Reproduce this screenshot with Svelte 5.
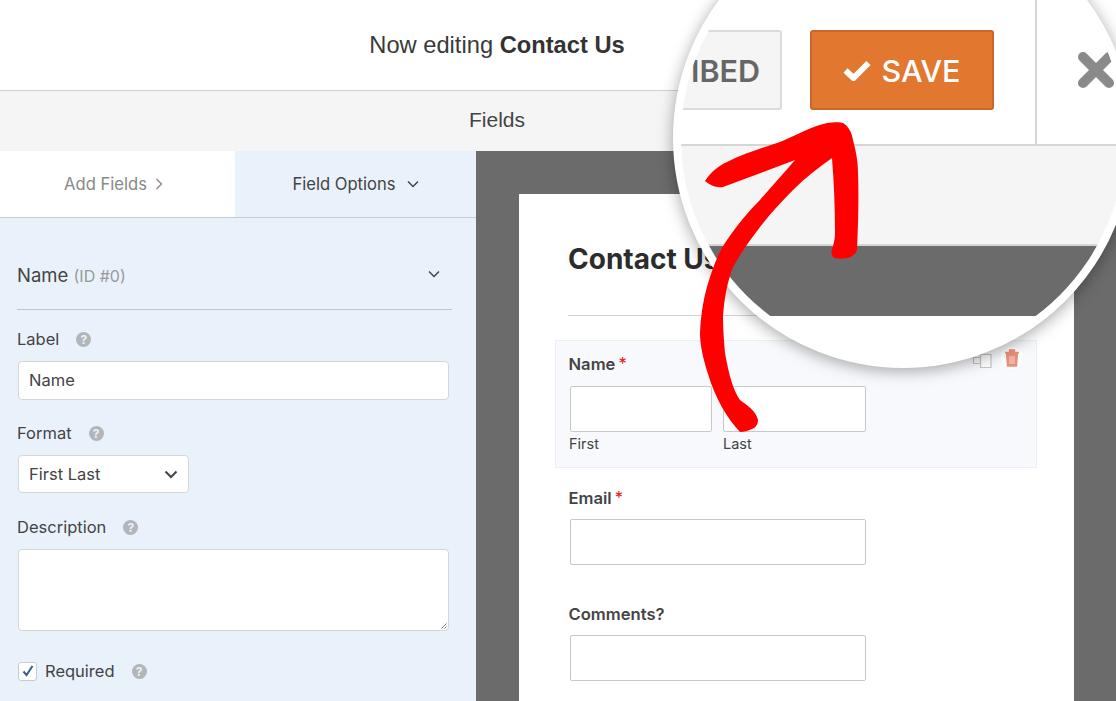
<script>
	const helpFields = {
		label: "Name",
		format: "First Last"
	};
</script>

{#snippet help()}
	<span class="help">?</span>
{/snippet}

{#snippet chevron(cls)}
	<svg class={cls} viewBox="0 0 12 8" width="12" height="8"><path d="M1 1.5l5 5 5-5" fill="none" stroke="currentColor" stroke-width="1.5" /></svg>
{/snippet}

<div class="page">
	<header class="top">
		<p>Now editing <b>Contact Us</b></p>
	</header>
	<div class="subbar">Fields</div>

	<div class="main">
		<aside class="panel">
			<div class="tabs">
				<div class="tab off">Add Fields <svg viewBox="0 0 8 12" width="8" height="12"><path d="M1.5 1l5 5-5 5" fill="none" stroke="currentColor" stroke-width="1.3" /></svg></div>
				<div class="tab on">Field Options {@render chevron("tabchev")}</div>
			</div>
			<div class="opts">
				<div class="opthead">
					<span class="optname">Name <small>(ID #0)</small></span>
					{@render chevron("headchev")}
				</div>
				<div class="lbl first">Label {@render help()}</div>
				<div class="box text">{helpFields.label}</div>
				<div class="lbl">Format {@render help()}</div>
				<div class="box select">{helpFields.format} <svg viewBox="0 0 14 9" width="14" height="9"><path d="M1.5 1.5L7 7l5.5-5.5" fill="none" stroke="#444" stroke-width="2" /></svg></div>
				<div class="lbl desc">Description {@render help()}</div>
				<div class="box area">
					<svg class="grip" viewBox="0 0 6 6" width="6" height="6"><path d="M0.5 5.5l5-5M3.5 5.5l2-2" stroke="#777" fill="none" /></svg>
				</div>
				<div class="req">
					<span class="check"><svg viewBox="0 0 14 14" width="14" height="14"><path d="M2.5 7.5l3 3.5 6-9" fill="none" stroke="#3c5f85" stroke-width="2" /></svg></span>
					Required {@render help()}
				</div>
			</div>
		</aside>

		<section class="stage">
			<div class="card">
				<h1>Contact Us</h1>
				<hr />
				<div class="field active">
					<div class="fname">Name<em>*</em></div>
					<div class="pair">
						<div>
							<div class="inp short"></div>
							<div class="sub">First</div>
						</div>
						<div class="last">
							<div class="inp short"></div>
							<div class="sub">Last</div>
						</div>
					</div>
					<div class="actions">
						<svg class="dup" viewBox="0 0 20 18" width="20" height="18"><path d="M8.5 4.5h10.5v13H8.5z" fill="#fff" stroke="#c4c4c4" stroke-width="1.2" /><path d="M8 7.5H1.5v6H8" fill="none" stroke="#c4c4c4" stroke-width="1.2" /></svg>
						<svg viewBox="0 0 24 24" width="24" height="24"><circle cx="12" cy="12" r="11" fill="#fff" /><path d="M5 6.5h14M9.5 6V4h5v2M6.5 8h11l-1 12h-9z" fill="#e9907c" stroke="#e9907c" stroke-width="1.3" /><path d="M10 10v8M12 10v8M14 10v8" stroke="#f8d5cc" /></svg>
					</div>
				</div>
				<div class="field email">
					<div class="fname">Email<em>*</em></div>
					<div class="inp wide"></div>
				</div>
				<div class="field comments">
					<div class="fname">Comments?</div>
					<div class="inp wide"></div>
				</div>
			</div>
		</section>
	</div>

	<!-- magnified corner of the builder -->
	<div class="lens">
		<div class="lens-top">
			<div class="embed">IBED</div>
			<div class="save">
				<svg viewBox="0 0 28 22" width="28" height="22"><path d="M2.5 11.5l8 7.5L25.5 4" fill="none" stroke="#fff" stroke-width="6" /></svg>
				SAVE
			</div>
			<div class="close">
				<svg viewBox="0 0 36 36" width="36" height="36"><path d="M5 5l26 26M31 5L5 31" stroke="#8a8a8a" stroke-width="10" stroke-linecap="round" /></svg>
			</div>
		</div>
		<div class="lens-bar"></div>
		<div class="lens-dark"></div>
		<div class="lens-white"></div>
	</div>

	<svg class="arrow" viewBox="0 0 1116 701" width="1116" height="701">
		<path
			fill="#ff0000"
			d="M740 432C727 418 716 400 708 374C703 358 700 345 700 333C701 312 704 295 710 277C715 262 720 250 727 240C738 224 748 212 760 200C772 186 784 173 795 160L723 187C716 188 710 185 705 181C711 172 718 166 727 162C745 153 762 148 780 142C797 135 812 126 827 123C835 122 840 122 843 123C849 127 852 133 853 140C857 155 858 165 858 173C859 200 858 225 857 250C856 254 852 257 847 258C842 259 836 259 833 257C831 254 831 252 832 250C834 243 835 238 835 233C835 208 834 183 832 158C818 168 805 178 793 190C781 202 770 214 760 227C750 240 741 253 733 267C727 283 724 300 723 317C723 330 724 342 725 353C729 375 733 390 740 400C747 405 756 411 758 420C758 425 755 428 752 429C748 431 744 432 740 432Z"
		/>
	</svg>
</div>

<style>
	:global(body) {
		margin: 0;
	}

	.page {
		position: relative;
		width: 1116px;
		height: 701px;
		overflow: hidden;
		background: #fff;
		font-family: Inter, "Liberation Sans", Arial, sans-serif;
		color: #444;
	}

	.top {
		height: 90px;
		border-bottom: 1px solid #d0d0d0;
		display: flex;
		align-items: center;
		justify-content: center;
		padding-right: 122px;
		font-family: "Liberation Sans", Arial, sans-serif;
	}

	.top p {
		margin: 0;
		font-size: 23.7px;
		color: #3a3a3a;
	}

	.top b {
		color: #333;
	}

	.subbar {
		height: 58px;
		padding-bottom: 2px;
		background: #f5f5f5;
		display: flex;
		align-items: center;
		justify-content: center;
		padding-right: 122px;
		font-family: "Liberation Sans", Arial, sans-serif;
		font-size: 21px;
		color: #444;
	}

	.main {
		display: flex;
		height: 550px;
	}

	.panel {
		width: 476px;
		flex: none;
		background: #e9f2fa;
		overflow: hidden;
	}

	.tabs {
		display: flex;
		height: 66px;
		border-bottom: 1px solid #c4ccd4;
	}

	.tab {
		display: flex;
		align-items: center;
		justify-content: center;
		gap: 8px;
		font-size: 16.6px;
	}

	.tab.off {
		width: 235px;
		box-sizing: border-box;
		padding-right: 8px;
		background: #fff;
		color: #888;
	}

	.tab.on {
		flex: 1;
		color: #444;
	}

	.tabchev {
		margin-left: 3px;
	}

	.opts {
		padding: 0 24px 0 17px;
	}

	.opthead {
		display: flex;
		align-items: center;
		justify-content: space-between;
		height: 65px;
		padding: 24px 12px 2px 0;
		border-bottom: 1px solid #bdc6cf;
	}

	.optname {
		font-size: 18.5px;
		color: #444;
	}

	.optname small {
		font-size: 16px;
		color: #999;
	}

	.headchev {
		color: #444;
		margin-top: -2px;
	}

	.lbl {
		display: flex;
		align-items: center;
		gap: 17px;
		height: 20px;
		margin: 23px 0 12px;
		font-size: 16.5px;
	}

	.lbl.first {
		margin-top: 19px;
	}

	.lbl.desc {
		margin-top: 24px;
	}

	.help {
		display: inline-block;
		width: 15px;
		height: 15px;
		margin-top: 1px;
		border-radius: 50%;
		background: #b3b6b9;
		color: #e9f2fa;
		font-size: 12px;
		font-weight: bold;
		line-height: 15px;
		text-align: center;
	}

	.box {
		box-sizing: border-box;
		margin: 0 3px 0 1px;
		background: #fff;
		border: 1px solid #d4d7da;
		border-radius: 4px;
		font-size: 16.5px;
		color: #444;
		display: flex;
		align-items: center;
		padding: 0 10px;
	}

	.text {
		height: 39px;
		padding-bottom: 1px;
	}

	.select {
		width: 171px;
		height: 38px;
		justify-content: space-between;
		padding-right: 10px;
	}

	.area {
		height: 82px;
		align-items: flex-end;
		justify-content: flex-end;
		padding: 0 1px 1px 0;
	}

	.req {
		display: flex;
		align-items: center;
		gap: 8px;
		margin: 30px 0 0 1px;
		font-size: 16.5px;
	}

	.req .help {
		margin-left: 9px;
	}

	.check {
		width: 17px;
		height: 17px;
		border: 1px solid #c8ccd0;
		border-radius: 3px;
		background: #fff;
		display: flex;
		align-items: center;
		justify-content: center;
	}

	.stage {
		flex: 1;
		background: #6b6b6b;
		padding: 43px 42px 0 43px;
	}

	.card {
		background: #fff;
		height: 520px;
		padding: 47px 36px 0 49px;
		box-sizing: border-box;
	}

	h1 {
		margin: 0;
		font-size: 28px;
		line-height: 36px;
		font-weight: 700;
		color: #2c2c2c;
	}

	hr {
		margin: 38px 14px 0 0;
		border: 0;
		border-top: 1px solid #d3d3d3;
	}

	.field {
		margin-top: 24px;
	}

	.fname {
		font-size: 16.6px;
		font-weight: 600;
		color: #444;
		line-height: 20px;
		margin-bottom: 11px;
		margin-top: -1px;
		padding-bottom: 1px;
		padding-left: 0.5px;
	}

	.fname em {
		color: #e02020;
		font-style: normal;
		font-weight: normal;
		margin-left: 3px;
	}

	.field.active {
		position: relative;
		margin: 24px 1px 0 -13px;
		height: 128px;
		box-sizing: border-box;
		padding: 14px 12px 0;
		background: #f7f9fc;
		border: 1px solid #eceff3;
	}

	.pair {
		display: flex;
		gap: 11px;
		padding-left: 2px;
	}

	.inp {
		box-sizing: border-box;
		height: 46px;
		background: #fff;
		border: 1px solid #c8c8c8;
		border-radius: 2px;
	}

	.short {
		width: 142px;
	}

	.last .short {
		width: 143px;
	}

	.wide {
		width: 296px;
		margin-left: 2px;
		margin-top: -1px;
	}

	.sub {
		font-size: 14.5px;
		line-height: 16px;
		margin-top: 4px;
		margin-left: -1px;
	}

	.last .sub {
		margin-left: 0;
	}

	.actions {
		position: absolute;
		top: 5px;
		right: 12px;
		display: flex;
		gap: 8px;
	}

	.dup {
		margin-top: 4px;
	}

	.field.email {
		margin-top: 21px;
	}

	.field.comments {
		margin-top: 40px;
	}

	.lens {
		position: absolute;
		left: 673px;
		top: -92px;
		width: 460px;
		height: 460px;
		box-sizing: border-box;
		border: 8px solid #fff;
		border-radius: 50%;
		box-shadow: 0 3px 16px rgba(0, 0, 0, 0.35);
		overflow: hidden;
		background: #fff;
		display: flex;
		flex-direction: column;
	}

	.lens-top {
		flex: none;
		height: 230px;
		box-sizing: border-box;
		border-bottom: 2px solid #d6d6d6;
		display: flex;
		align-items: flex-start;
		font-size: 30.5px;
	}

	.embed {
		flex: none;
		width: 101px;
		height: 80px;
		margin-top: 114px;
		box-sizing: border-box;
		background: #f5f5f5;
		border: 2px solid #dcdcdc;
		border-left: 0;
		border-radius: 3px;
		color: #666;
		font-weight: 600;
		display: flex;
		align-items: center;
		justify-content: flex-end;
		padding-right: 20px;
	}

	.save {
		flex: none;
		width: 184px;
		height: 80px;
		margin: 114px 0 0 28px;
		box-sizing: border-box;
		background: #e27730;
		border: 2px solid #c9682a;
		border-radius: 3px;
		color: #fff;
		font-weight: 500;
		display: flex;
		align-items: center;
		justify-content: center;
		gap: 10px;
	}

	.close {
		flex: none;
		align-self: stretch;
		margin-left: 41px;
		padding: 136px 0 0 41px;
		border-left: 2px solid #d6d6d6;
	}

	.lens-bar {
		flex: none;
		height: 98px;
		background: #f5f5f5;
		border-bottom: 2px solid #d6d6d6;
	}

	.lens-dark {
		flex: none;
		height: 70px;
		background: #6b6b6b;
	}

	.lens-white {
		flex: 1;
		background: #fff;
	}

	.arrow {
		position: absolute;
		left: 0;
		top: 0;
		pointer-events: none;
	}
</style>
